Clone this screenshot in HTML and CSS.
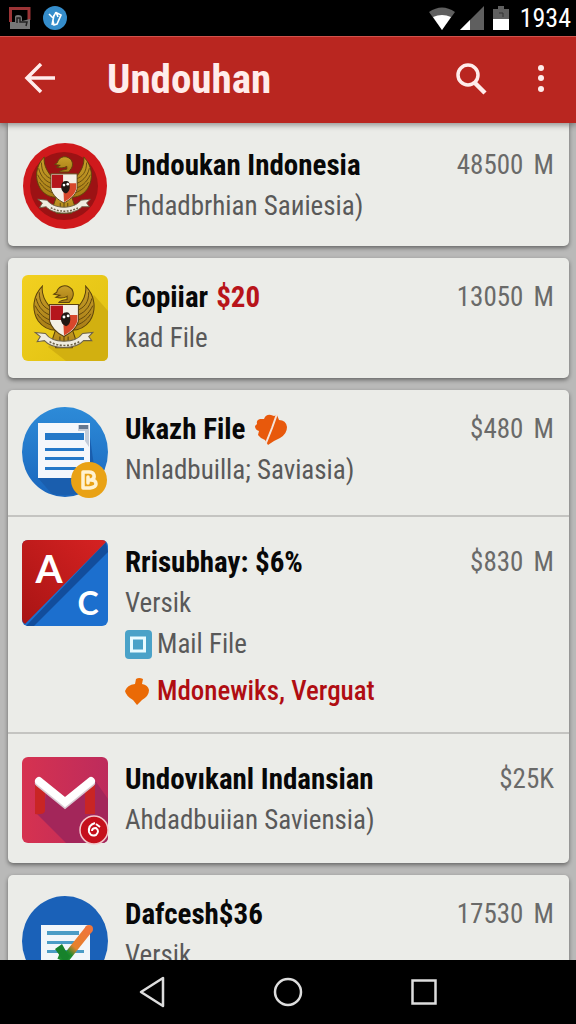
FILE: index.html
```html
<!DOCTYPE html>
<html lang="id">
<head>
  <meta charset="UTF-8">
  <meta name="viewport" content="width=device-width, initial-scale=1.0">
  <title>Undouhan</title>
  <link rel="stylesheet" href="styles.css">
</head>
<body>
  <!-- shared shapes -->
  <svg class="defs" width="0" height="0" aria-hidden="true">
    <defs>
      <linearGradient id="gold" x1="0" y1="0" x2="0" y2="1">
        <stop offset="0" stop-color="#c9a02a"/>
        <stop offset="1" stop-color="#a87d16"/>
      </linearGradient>
      <linearGradient id="yellow" x1="0" y1="0" x2="1" y2="1">
        <stop offset="0" stop-color="#f2d020"/>
        <stop offset="1" stop-color="#dfc010"/>
      </linearGradient>
      <linearGradient id="blue" x1="0" y1="0" x2="0" y2="1">
        <stop offset="0" stop-color="#2d8bd8"/>
        <stop offset="1" stop-color="#1a66bd"/>
      </linearGradient>
      <linearGradient id="red" x1="1" y1="0" x2="0" y2="1">
        <stop offset="0" stop-color="#d62222"/>
        <stop offset="1" stop-color="#a81414"/>
      </linearGradient>
      <linearGradient id="pink" x1="0" y1="0" x2="1" y2="0">
        <stop offset="0" stop-color="#d63250"/>
        <stop offset="1" stop-color="#bd2b5c"/>
      </linearGradient>
      <linearGradient id="pen" x1="0" y1="1" x2="1" y2="0">
        <stop offset="0.25" stop-color="#1d8a2e"/>
        <stop offset="0.45" stop-color="#e5822c"/>
        <stop offset="1" stop-color="#f0743c"/>
      </linearGradient>
      <symbol id="garuda" viewBox="0 0 62 66">
        <g stroke="#5c430c" stroke-width="1">
          <path fill="url(#gold)" d="M10 1 C1 10 -1 24 6 35 C11 42 17 44 24 44 L24 23 L17 21 C12 15 9 8 10 1Z"/>
          <path fill="url(#gold)" d="M52 1 C61 10 63 24 56 35 C51 42 45 44 38 44 L38 23 L45 21 C50 15 53 8 52 1Z"/>
          <path fill="none" stroke-width="0.9" d="M7 7 C7 17 11 22 19 25 M4 13 C6 22 12 28 20 30 M3 20 C7 28 12 33 21 35 M5 28 C9 34 14 38 22 40 M55 7 C55 17 51 22 43 25 M58 13 C56 22 50 28 42 30 M59 20 C55 28 50 33 41 35 M57 28 C53 34 48 38 40 40"/>
          <path fill="url(#gold)" d="M24 7 C25 2 31 -1 36 2 C40 4 41 9 39 13 L36 17 L26 17 C27 15 30 15 34 14 L34 11 C31 13 27 13 23 12 L27 10 L21 9Z"/>
          <path fill="url(#gold)" d="M24 40 L38 40 L42 52 L39 61 L23 61 L20 52Z"/>
          <path fill="none" d="M27 50 V61 M31 48 V61 M35 50 V61"/>
        </g>
        <path fill="#f4efe6" stroke="#59400e" stroke-width="1" d="M17 19 H45 V35 C43 43 36 47 31 50 C25 47 19 42 17 35Z"/>
        <path fill="#b5161c" d="M18 20 H30 V34 H18Z"/>
        <path fill="#d8472b" d="M30 29 H44 V35 C42 42 36 46 31 49Z"/>
        <path fill="#211814" d="M31 27 Q37 25 37 31 Q38 38 33 40 Q28 38 28 33 Q28 29 31 27Z"/>
        <circle cx="31" cy="31" r="1.4" fill="#fff"/>
        <circle cx="35" cy="30" r="1.4" fill="#fff"/>
        <path fill="#f0ece0" stroke="#6d6248" stroke-width="1" d="M3 46 L13 47 C20 57 42 57 49 47 L59 46 L55 50 L58 54 L50 54 C42 63 20 63 12 54 L5 55 L8 50Z"/>
        <path fill="none" stroke="#6d6248" stroke-width="1.6" stroke-dasharray="2 1.5" d="M17 55 C25 60 38 60 46 55"/>
      </symbol>
    </defs>
  </svg>

  <div class="status-bar">
    <div class="status-icons">
      <svg width="22" height="24" viewBox="0 0 22 24" aria-hidden="true">
        <path fill="none" stroke="#9c3436" stroke-width="3" d="M1.500 16 V2.500 H20 V14"/>
        <path fill="#777" d="M1 16 H6 V11 Q6 9 9 9 Q13 9 13 12 V15 L21 13 V23 H1Z"/>
        <path fill="none" stroke="#222" stroke-width="1.500" d="M8 17 V12 H11 V16 H18 L17 20"/>
      </svg>
      <svg width="24" height="24" viewBox="0 0 24 24" aria-hidden="true">
        <circle cx="12" cy="12" r="12" fill="#358dcb"/>
        <path fill="none" stroke="#fff" stroke-width="1.600" d="M6 8 L10 12 L13 6 M11 9 L9 19 M14 7 L18 9 L14 18 L11 19 L10 15 M13 6 L15 11"/>
      </svg>
    </div>
    <div class="status-icons status-right">
      <svg width="28" height="24" viewBox="0 0 28 24" aria-hidden="true">
        <path fill="#5f5f5f" d="M1 6 Q14 -3 27 6 L14 24Z"/>
        <path fill="#fff" d="M5 11 Q14 7 23 11 L14 24Z"/>
      </svg>
      <svg width="24" height="24" viewBox="0 0 24 24" aria-hidden="true">
        <path fill="#5f5f5f" d="M0 24 L24 0 V24Z"/>
        <path fill="#fff" d="M0 24 L10 14 V24Z"/>
      </svg>
      <svg class="battery" width="16" height="24" viewBox="0 0 16 24" aria-hidden="true">
        <path fill="#5f5f5f" d="M5 0 H11 V3 H16 V14 H0 V3 H5Z"/>
        <path fill="none" stroke="#333" d="M6 7 H10 V11"/>
        <path fill="#fff" d="M0 13 H16 V24 H0Z"/>
      </svg>
      <span class="clock">1934</span>
    </div>
  </div>

  <header class="app-bar">
    <button class="icon-btn" aria-label="Kembali">
      <svg width="32" height="32" viewBox="0 0 32 32" aria-hidden="true">
        <path fill="none" stroke="#ffeceb" stroke-width="3.500" d="M31 15 H3 M17 1 L3 15 L17 29"/>
      </svg>
    </button>
    <h1>Undouhan</h1>
    <button class="icon-btn" aria-label="Cari">
      <svg width="32" height="32" viewBox="0 0 32 32" aria-hidden="true">
        <circle cx="13" cy="12" r="10" fill="none" stroke="#ffeceb" stroke-width="3.500"/>
        <path stroke="#ffeceb" stroke-width="4.500" d="M19 19 L30 30"/>
      </svg>
    </button>
    <button class="icon-btn more" aria-label="Menu">
      <svg width="8" height="28" viewBox="0 0 8 28" aria-hidden="true">
        <g fill="#ffeceb"><circle cx="4" cy="3" r="3"/><circle cx="4" cy="13" r="3"/><circle cx="4" cy="24" r="3"/></g>
      </svg>
    </button>
  </header>

  <main class="list">
    <section class="card card-first">
      <article class="row">
        <svg class="thumb" viewBox="0 0 86 86" aria-hidden="true">
          <ellipse cx="43" cy="43" rx="42" ry="43" fill="#d0191c"/>
          <circle cx="42" cy="43" r="34" fill="#9c1214"/>
          <use href="#garuda" x="12" y="13" width="60" height="62"/>
        </svg>
        <div class="text">
          <h2>Undoukan Indonesia</h2>
          <p>Fhdadbrhian Saиiesia)</p>
        </div>
        <span class="size">48500 <span>M</span></span>
      </article>
    </section>

    <section class="card">
      <article class="row">
        <svg class="thumb" viewBox="0 0 86 86" aria-hidden="true">
          <rect width="86" height="86" rx="6" fill="url(#yellow)"/>
          <path fill="#d2b010" d="M72 20 L86 36 V80 Q86 86 80 86 H44 L26 72Z"/>
          <use href="#garuda" x="9" y="10" width="66" height="68"/>
        </svg>
        <div class="text">
          <h2>Copiiar <span class="price">$20</span></h2>
          <p>kad File</p>
        </div>
        <span class="size">13050 <span>M</span></span>
      </article>
    </section>

    <section class="card">
      <article class="row">
        <svg class="thumb" viewBox="0 0 86 91" aria-hidden="true">
          <ellipse cx="43" cy="45" rx="43" ry="45" fill="url(#blue)"/>
          <path fill="#1a5eae" d="M16 71 L30 87 Q60 92 74 74 L68 30Z"/>
          <path fill="#f4f7fb" d="M16 16 H68 V71 H16Z"/>
          <path fill="#c3ccd9" d="M56 18 H67 V40 L63 34 V24 H56Z"/>
          <path fill="#66788f" d="M57 18 H66 V22 H57Z"/>
          <path fill="#2478c8" d="M23 26 H62 V33 H23Z M23 41 H62 V44 H23Z M23 50 H62 V53 H23Z M23 60 H54 V63 H23Z"/>
          <circle cx="67" cy="73" r="18" fill="#e9a215"/>
          <path fill="none" stroke="#fff2d0" stroke-width="3.500" stroke-linejoin="round" stroke-linecap="round" d="M66 73 H69 Q73 72 72 68 Q71 65 67 65 H61 V81 H68 Q74 80 74 77 Q74 73 69 73 M66 70 V76"/>
        </svg>
        <div class="text">
          <h2>Ukazh File
            <svg class="leaf" width="32" height="32" viewBox="0 0 32 32" aria-hidden="true">
              <path fill="#e8590c" d="M13 31 L10 26 Q6 25 3 21 L4 17 Q0 16 0 12 L2 10 Q1 6 5 5 L9 5 Q11 0 16 1 L19 2 L22 1 L24 6 Q31 6 32 13 Q32 20 25 24 Q18 27 13 31Z"/>
              <path fill="none" stroke="#f4e4da" stroke-width="2" d="M22 0 L17 14 L11 29"/>
            </svg>
          </h2>
          <p>Nnladbuilla; Saviasia)</p>
        </div>
        <span class="size">$480 <span>M</span></span>
      </article>

      <article class="row roomy">
        <svg class="thumb" viewBox="0 0 86 86" aria-hidden="true">
          <rect width="86" height="86" rx="6" fill="#1c6fce"/>
          <path fill="#124d9c" d="M84 2 L86 12 L12 86 H4Z"/>
          <path fill="url(#red)" d="M6 0 H80 Q83 0 84 2 L3 84 Q0 82 0 79 V6 Q0 0 6 0Z"/>
          <text class="letter" x="27" y="43" font-size="39">A</text>
          <text class="letter" x="66" y="75" font-size="32">C</text>
        </svg>
        <div class="text">
          <h2>Rrisubhay: $6%</h2>
          <p>Versik</p>
          <p class="tag">
            <svg width="27" height="29" viewBox="0 0 27 29" aria-hidden="true">
              <rect width="27" height="29" rx="4" fill="#4aa2c8"/>
              <rect x="6.500" y="8" width="13" height="13" fill="none" stroke="#e9fbff" stroke-width="3"/>
            </svg>
            Mail File
          </p>
          <p class="tag alert">
            <svg width="27" height="28" viewBox="0 0 27 28" aria-hidden="true">
              <path fill="#ea6a06" d="M10 6 L11 1 Q14 -1 18 1 L17 6 Q23 7 24 12 Q24 18 17 22 L12 27 L8 22 Q1 18 0 13 Q2 7 10 6Z"/>
            </svg>
            Mdonewiks, Verguat
          </p>
        </div>
        <span class="size">$830 <span>M</span></span>
      </article>

      <article class="row roomy">
        <svg class="thumb" viewBox="0 0 86 86" aria-hidden="true">
          <rect width="86" height="86" rx="6" fill="url(#pink)"/>
          <path fill="#a3265a" d="M14 56 L44 86 H80 Q86 86 86 80 V42 L72 22 L43 48 L24 32 L22 54Z"/>
          <path fill="#c92524" d="M13 24 L23 32 V54 Q22 58 13 57Z M63 34 L73 25 V57 H63Z"/>
          <path fill="none" stroke="#d9c9d2" stroke-width="8" stroke-linecap="round" d="M17 26 L43 47 L69 26"/>
          <path fill="none" stroke="#fff" stroke-width="8" stroke-linecap="round" d="M17 24 L43 45 L69 24"/>
          <circle cx="72" cy="73" r="14" fill="#c5101c" stroke="#f3c8cb" stroke-width="1.500"/>
          <path fill="none" stroke="#fff" stroke-width="2" d="M73 66 Q66 68 67 75 Q69 80 74 78 Q78 74 74 71 Q70 71 70 74 M74 67 L78 70"/>
        </svg>
        <div class="text">
          <h2>Undovıkanl Indansian</h2>
          <p>Ahdadbuiian Saviensia)</p>
        </div>
        <span class="size">$25K</span>
      </article>
    </section>

    <section class="card">
      <article class="row">
        <svg class="thumb" viewBox="0 0 86 94" aria-hidden="true">
          <ellipse cx="43" cy="49" rx="43" ry="45" fill="#1a61b8"/>
          <path fill="#f2f6fa" d="M19 33 H68 V86 H19Z"/>
          <path fill="#4b9cc6" d="M25 39 H57 V43 H25Z M25 49 H54 V52 H25Z M25 58 H62 V61 H25Z"/>
          <path fill="none" stroke="url(#pen)" stroke-width="8" d="M37 63 L44 66 L67 37"/>
          <path fill="#17822b" d="M33 57 L40 52 L45 61 L48 64 L43 71Z"/>
          <circle cx="67" cy="37" r="4" fill="#ef763b"/>
        </svg>
        <div class="text">
          <h2>Dafcesh$36</h2>
          <p>Versik</p>
        </div>
        <span class="size">17530 <span>M</span></span>
      </article>
    </section>
  </main>

  <nav class="nav-bar">
    <button class="icon-btn" aria-label="Kembali">
      <svg width="26" height="32" viewBox="0 0 26 32" aria-hidden="true">
        <path fill="none" stroke="#ddd" stroke-width="2.500" stroke-linejoin="round" d="M24 2 V30 L2 16Z"/>
      </svg>
    </button>
    <button class="icon-btn" aria-label="Beranda">
      <svg width="30" height="30" viewBox="0 0 30 30" aria-hidden="true">
        <circle cx="15" cy="15" r="13" fill="none" stroke="#ddd" stroke-width="2.500"/>
      </svg>
    </button>
    <button class="icon-btn" aria-label="Terbaru">
      <svg width="26" height="26" viewBox="0 0 26 26" aria-hidden="true">
        <rect x="1.500" y="1.500" width="23" height="23" fill="none" stroke="#ddd" stroke-width="2.500"/>
      </svg>
    </button>
  </nav>
</body>
</html>
```
FILE: styles.css
```css
* {
  box-sizing: border-box;
}

body {
  display: flex;
  flex-direction: column;
  height: 100vh;
  margin: 0;
  background: #b9b9b8;
  font-family: "Roboto Condensed", Roboto, sans-serif;
  font-size: 27px;
  color: #595959;
}

h1, h2, p {
  margin: 0;
}

svg {
  display: block;
  flex: none;
}

.defs {
  position: absolute;
}

.status-bar {
  display: flex;
  flex: none;
  align-items: center;
  justify-content: space-between;
  height: 36px;
  padding: 0 5px 0 9px;
  background: #000;
  color: #fff;
}

.status-icons {
  display: flex;
  align-items: center;
  gap: 12px;
}

.status-right {
  gap: 4px;
}

.battery {
  margin: 0 7px 0 5px;
}

.clock {
  font-size: 26px;
  line-height: 36px;
}

.icon-btn {
  display: flex;
  align-items: center;
  justify-content: center;
  padding: 0;
  border: none;
  background: none;
  cursor: pointer;
}

.app-bar {
  display: flex;
  flex: none;
  align-items: center;
  height: 87px;
  padding: 0 31px 2px 24px;
  background: #b92620;
  border-top: 1px solid #d0524c;
  box-shadow: 0 2px 6px rgba(0, 0, 0, 0.4);
  position: relative;
}

.app-bar h1 {
  flex: 1;
  margin-left: 51px;
  color: #ffeceb;
  font-size: 41px;
  line-height: 48px;
  font-weight: 700;
}

.more {
  margin-left: 50px;
}

.list {
  flex: 1;
  min-height: 0;
  overflow: hidden;
  padding: 0 7px 0 8px;
}

.card {
  margin-bottom: 12px;
  background: #ebece8;
  border-radius: 5px;
  box-shadow: 0 2px 4px rgba(0, 0, 0, 0.45);
}

.card-first {
  padding-top: 3px;
  border-radius: 0 0 5px 5px;
}

.row {
  display: flex;
  align-items: flex-start;
  padding: 17px 15px 17px 14px;
}

.row + .row {
  border-top: 2px solid #c4c4c1;
}

.roomy {
  padding-top: 23px;
  padding-bottom: 20px;
}

.thumb {
  width: 86px;
  margin-right: 17px;
  overflow: visible;
}

.letter {
  fill: #fff;
  font-family: Lato, sans-serif;
  font-weight: 700;
  text-anchor: middle;
}

.text {
  flex: 1;
  padding-top: 2px;
  line-height: 41px;
  white-space: nowrap;
}

.text h2 {
  display: flex;
  align-items: center;
  gap: 8px;
  color: #080808;
  font-size: 29px;
  font-weight: 700;
}

.price {
  color: #b8141a;
}

.leaf {
  margin-left: 2px;
}

.tag {
  display: flex;
  align-items: center;
  gap: 5px;
}

.alert {
  margin-top: 6px;
  color: #b00d12;
  font-weight: 500;
}

.size {
  padding-top: 2px;
  line-height: 41px;
  color: #6a6a69;
}

.size span {
  margin-left: 4px;
}

.nav-bar {
  display: flex;
  flex: none;
  align-items: center;
  justify-content: center;
  gap: 108px;
  height: 64px;
  background: #000;
}
```
